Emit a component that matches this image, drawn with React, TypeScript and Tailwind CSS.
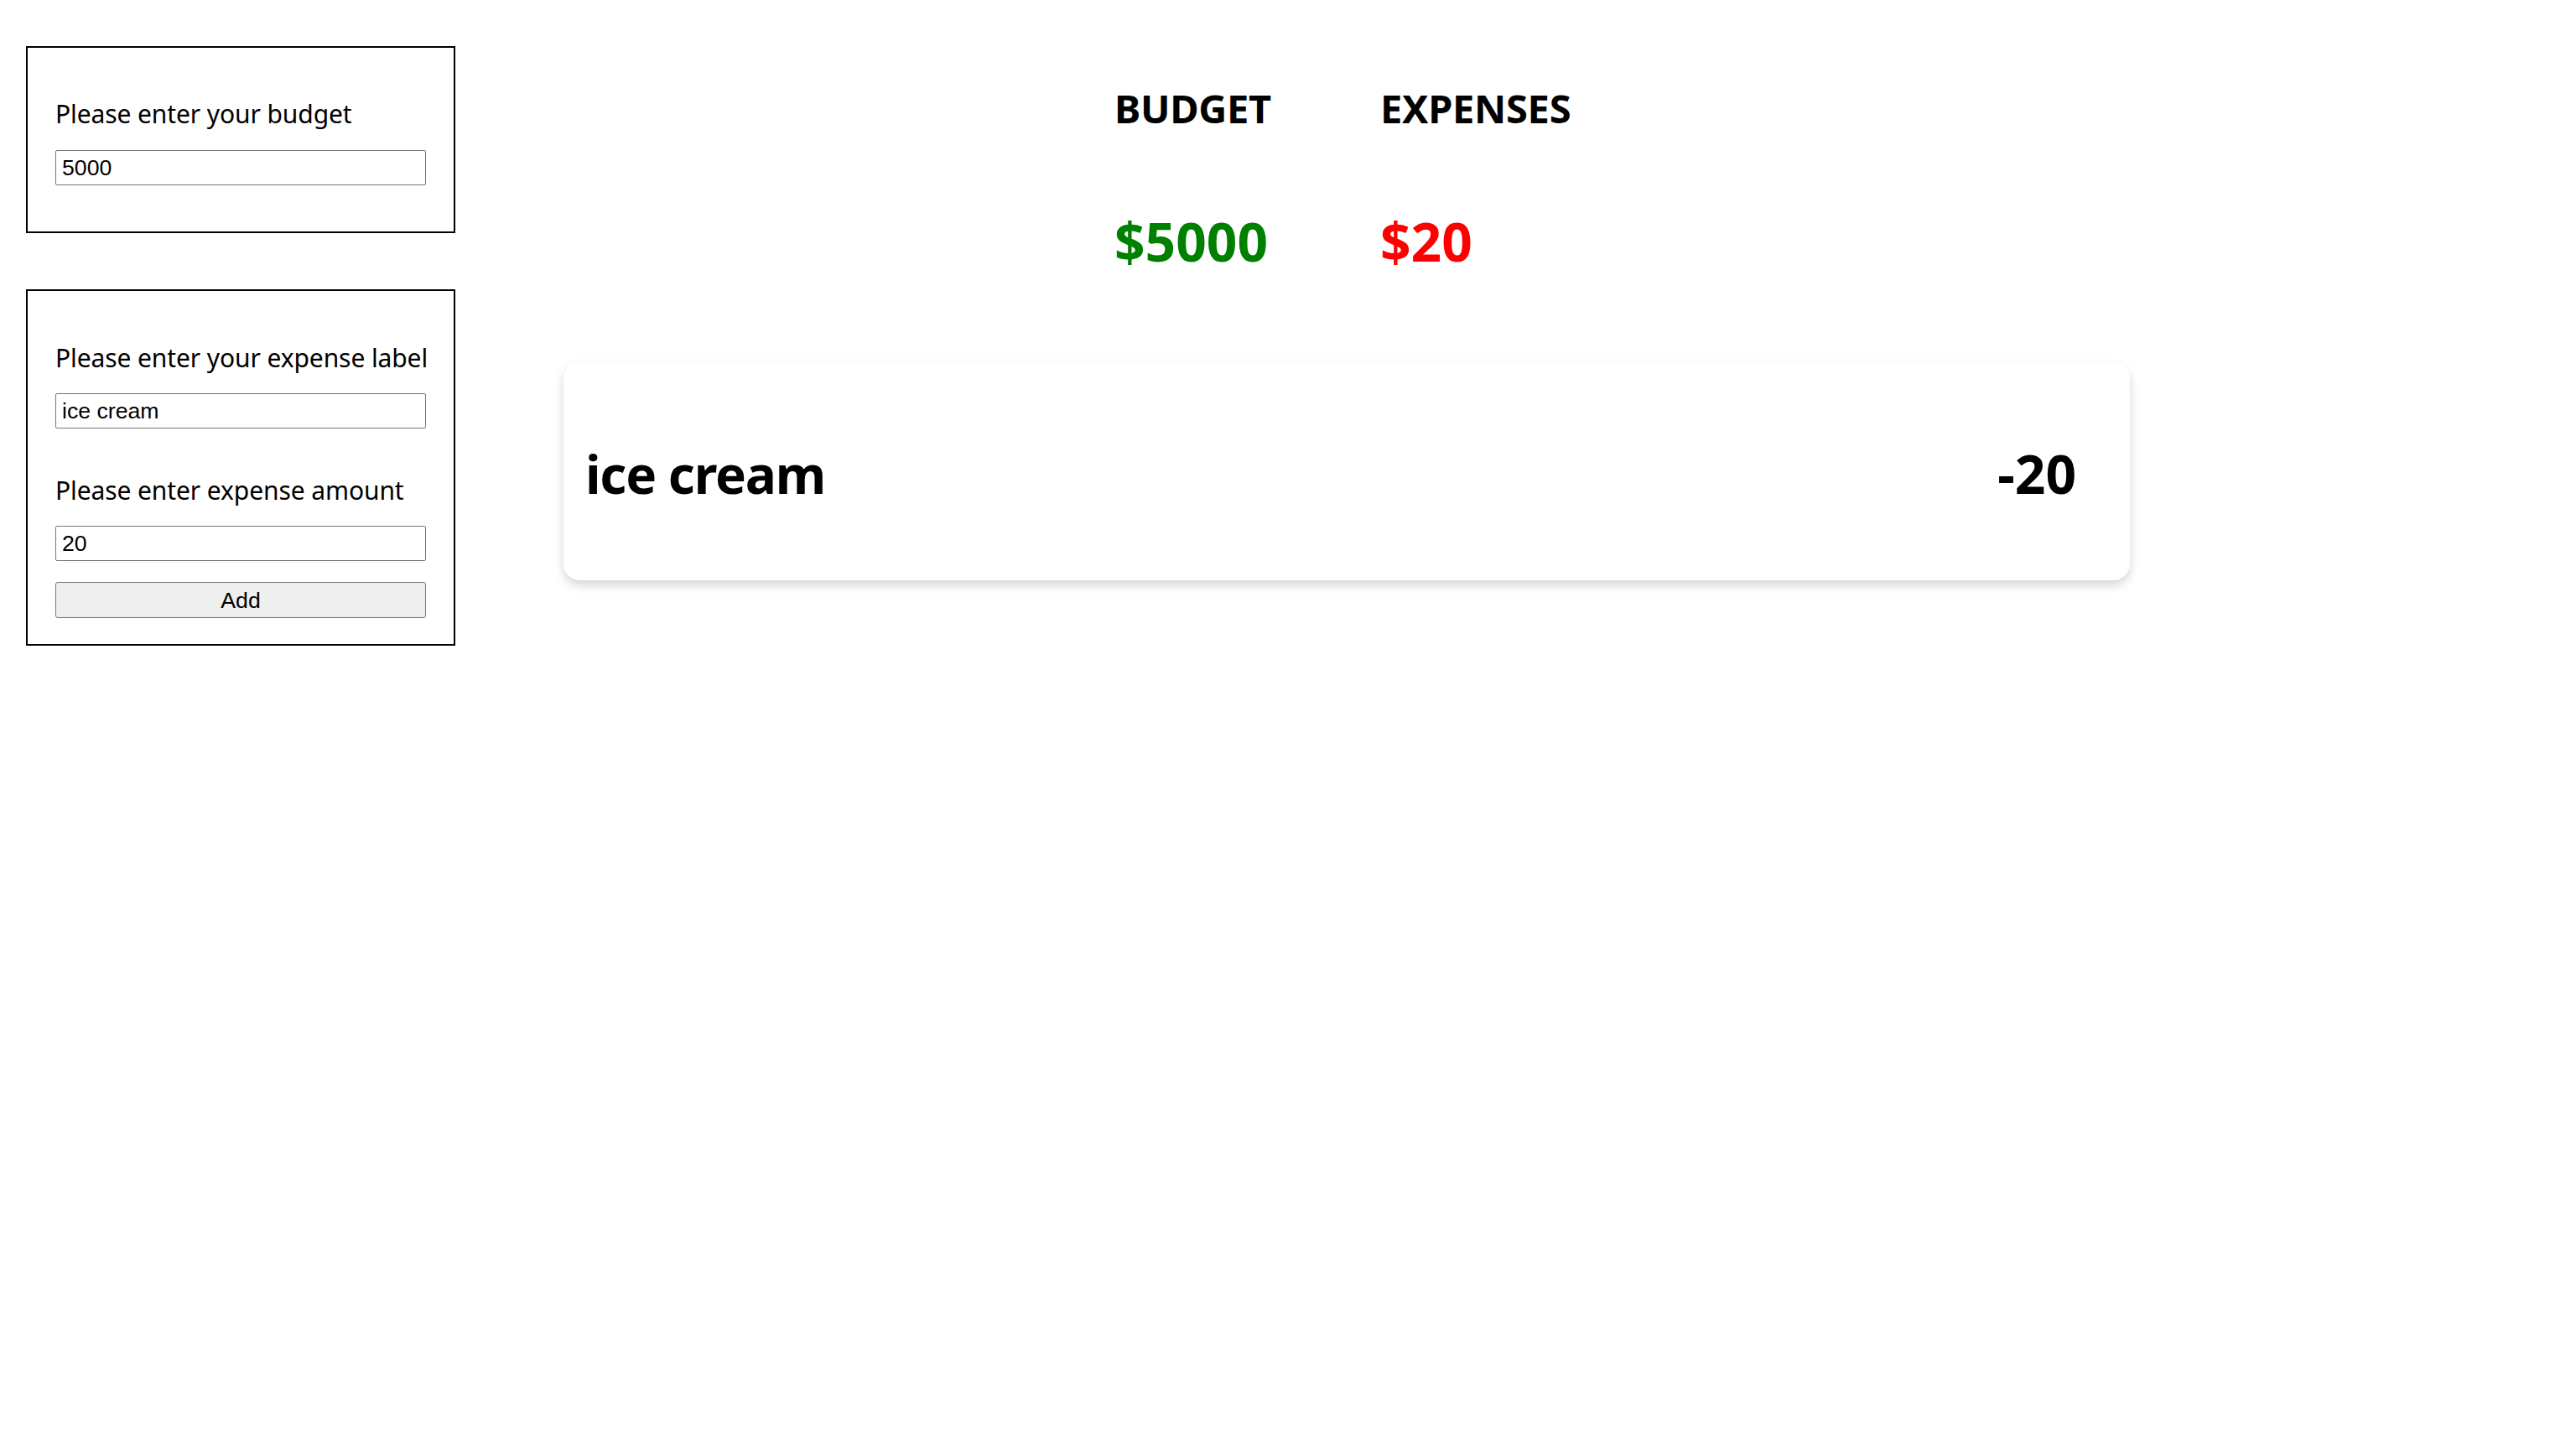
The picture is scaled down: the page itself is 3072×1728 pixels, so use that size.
import React from "react";

const label = "block whitespace-nowrap text-[30px] leading-[42px] tracking-[-0.1px] text-black";
const field =
  "block h-[42px] w-full rounded-[2px] border border-[#767676] bg-white px-[7px] font-['Liberation_Sans',Arial,sans-serif] text-[26.67px] text-black outline-none";

function Stat({ title, value, color }: { title: string; value: string; color: string }) {
  return (
    <div className="w-[317px]">
      <h2 className="text-[47px] font-bold leading-none tracking-[-0.3px] text-black">{title}</h2>
      <p className={`mt-[103px] text-[64px] font-bold leading-none ${color}`}>{value}</p>
    </div>
  );
}

export default function App() {
  return (
    <div className="flex min-h-screen items-start bg-white font-['Noto_Sans',sans-serif]">
      <aside className="ml-[31px] mt-[55px] flex w-[512px] flex-col gap-[67px]">
        <form className="border-2 border-black px-[33px] pb-[55px] pt-[58px]">
          <label className={label}>Please enter your budget</label>
          <input className={`${field} mt-[22px]`} defaultValue="5000" />
        </form>

        <form className="border-2 border-black px-[33px] pb-[31px] pt-[59px]">
          <label className={label}>Please enter your expense label</label>
          <input className={`${field} mt-[21px]`} defaultValue="ice cream" />
          <label className={`${label} mt-[53px]`}>Please enter expense amount</label>
          <input className={`${field} mt-[21px]`} defaultValue="20" />
          <button
            type="button"
            className="mt-[25px] block h-[43px] w-full rounded-[3px] border border-[#767676] bg-[#efefef] font-['Liberation_Sans',Arial,sans-serif] text-[26.67px] text-black"
          >
            Add
          </button>
        </form>
      </aside>

      <main className="ml-[129px] mt-[106px] flex w-[1868px] flex-col">
        <div className="flex pl-[657px]">
          <Stat title="BUDGET" value="$5000" color="text-[#008000]" />
          <Stat title="EXPENSES" value="$20" color="text-[#ff0000]" />
        </div>

        <div className="mt-[111px] flex h-[261px] items-center justify-between rounded-[20px] bg-white pl-[26px] pr-[64px] pt-[6px] shadow-[0_6px_12px_rgba(0,0,0,0.16)]">
          <h1 className="text-[62px] font-bold leading-none tracking-[-1.2px] text-black">ice cream</h1>
          <h1 className="text-[64px] font-bold leading-none text-black">-20</h1>
        </div>
      </main>
    </div>
  );
}
